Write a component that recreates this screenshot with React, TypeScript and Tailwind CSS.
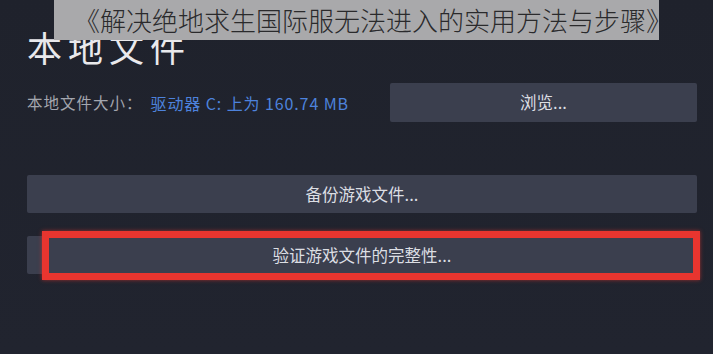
import React from 'react';

const cjk = { fontFamily: '"Noto Sans CJK SC", "Noto Sans", sans-serif' };

function SteamButton({ children, className = '' }: { children: React.ReactNode; className?: string }) {
  return (
    <div
      className={
        'flex items-center justify-center rounded-[2px] bg-[#3b3f4e] text-[16.5px] text-[#dcdee3] ' + className
      }
    >
      {children}
    </div>
  );
}

export default function App() {
  return (
    <div
      className="relative h-[354px] w-[713px] overflow-hidden bg-gradient-to-b from-[#1f222c] to-[#21242f]"
      style={cjk}
    >
      <div className="flex flex-col pl-[27px] pr-[16px]">
        <h1 className="mt-[27px] h-[40px] text-[35px] leading-[40px] tracking-[6px] text-[#e9e9ec]">本地文件</h1>

        <div className="mt-[16px] flex items-center">
          <div className="flex w-[363px] items-center whitespace-nowrap">
            <span className="text-[15.5px] tracking-[1px] text-[#a3a6ae]">本地文件大小：</span>
            <span className="ml-[8px] text-[16px] tracking-[0.9px] text-[#4d82dc]">驱动器 C: 上为 160.74 MB</span>
          </div>
          <SteamButton className="h-[39px] flex-1 bg-[#3a4252]">浏览...</SteamButton>
        </div>

        <SteamButton className="mt-[53px] h-[38px]">备份游戏文件...</SteamButton>
        <SteamButton className="mt-[23px] h-[38px]">验证游戏文件的完整性...</SteamButton>
      </div>

      {/* red annotation frame */}
      <div className="absolute left-[42px] top-[231px] h-[49px] w-[658px] border-[7px] border-[#e8352f] shadow-[0_0_4px_rgba(232,53,47,0.6)]" />

      {/* caption overlay */}
      <div className="absolute left-[54px] top-0 flex h-[40px] w-[605px] items-center bg-[#a9a9ab] pl-[20px]">
        <span className="whitespace-nowrap text-[26px] leading-none font-light text-[#2a2a2c]">
          《解决绝地求生国际服无法进入的实用方法与步骤》
        </span>
      </div>
    </div>
  );
}
